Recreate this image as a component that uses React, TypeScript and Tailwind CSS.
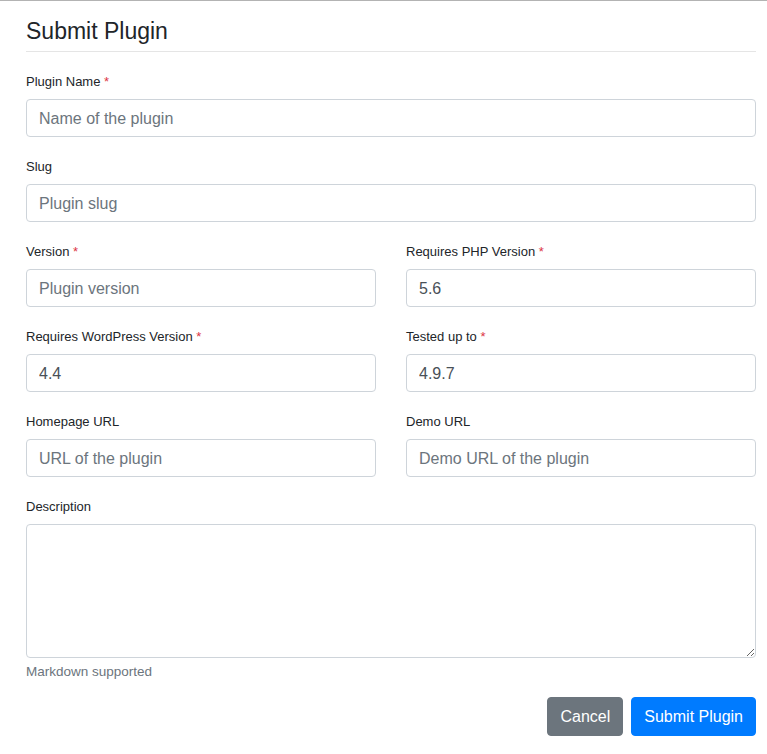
import { useState } from "react";

function Label({ text, required }: { text: string; required?: boolean }) {
  return (
    <label className="block text-[13px] leading-[22px] mb-[6px] text-[#212529]">
      {text}
      {required && <span className="text-[#dc3545]"> *</span>}
    </label>
  );
}

function Input({ placeholder, defaultValue }: { placeholder: string; defaultValue?: string }) {
  return (
    <input
      type="text"
      placeholder={placeholder}
      defaultValue={defaultValue}
      className="block w-full h-[38px] px-3 pt-[1px] rounded-[4px] border border-[#ced4da] bg-white text-[16px] text-[#495057] placeholder:text-[#6c757d] outline-none"
    />
  );
}

function Field({ label, required, placeholder, value }: { label: string; required?: boolean; placeholder: string; value?: string }) {
  return (
    <div className="mb-[19px]">
      <Label text={label} required={required} />
      <Input placeholder={placeholder} defaultValue={value} />
    </div>
  );
}

export default function App() {
  const [desc, setDesc] = useState("");
  return (
    <div className="min-h-screen bg-white border-t border-[#b3b3b3]" style={{ fontFamily: '"Liberation Sans", Arial, sans-serif' }}>
      <div className="ml-[26px] w-[730px]">
        <div className="pt-[16px] pb-[5px] border-b border-[#e5e5e5] mb-[19px]">
          <h4 className="text-[23px] leading-[29px] font-normal text-[#212529]">Submit Plugin</h4>
        </div>

        <Field label="Plugin Name" required placeholder="Name of the plugin" />
        <Field label="Slug" placeholder="Plugin slug" />

        <div className="grid grid-cols-2 gap-x-[30px]">
          <Field label="Version" required placeholder="Plugin version" />
          <Field label="Requires PHP Version" required placeholder="PHP version" value="5.6" />
          <Field label="Requires WordPress Version" required placeholder="WordPress version" value="4.4" />
          <Field label="Tested up to" required placeholder="Tested up to" value="4.9.7" />
          <Field label="Homepage URL" placeholder="URL of the plugin" />
          <Field label="Demo URL" placeholder="Demo URL of the plugin" />
        </div>

        <div>
          <Label text="Description" />
          <textarea
            value={desc}
            onChange={(e) => setDesc(e.target.value)}
            className="block w-full h-[134px] px-3 py-[6px] rounded-[4px] border border-[#ced4da] text-[16px] text-[#495057] outline-none"
          />
          <p className="mt-[4px] text-[13.5px] leading-[20px] text-[#6c757d]">Markdown supported</p>
        </div>

        <div className="flex justify-end gap-2 mt-[15px]">
          <button className="h-[39px] px-3 rounded-[4px] bg-[#6c757d] border border-[#6c757d] text-white text-[16px]">Cancel</button>
          <button className="h-[39px] px-3 rounded-[4px] bg-[#007bff] border border-[#007bff] text-white text-[16px]">Submit Plugin</button>
        </div>
      </div>
    </div>
  );
}
